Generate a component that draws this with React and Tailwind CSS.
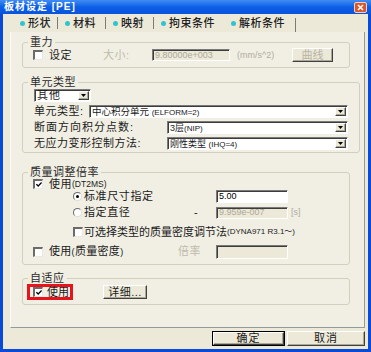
import React from "react";

const sunken =
  "border border-t-[#7a7a7a] border-l-[#7a7a7a] border-b-[#ffffff] border-r-[#ffffff] shadow-[inset_1px_1px_0_#3c3c3c]";
const raised =
  "bg-[#ece9d8] border border-t-[#ffffff] border-l-[#ffffff] border-b-[#404040] border-r-[#404040] shadow-[inset_-1px_-1px_0_#aca899]";

function Check({ checked }) {
  return (
    <span className="w-[10px] h-[10px] shrink-0 flex items-center justify-center bg-white border-t-2 border-l-2 border-t-[#6b6b6b] border-l-[#6b6b6b] border-b border-r border-b-[#e8e8e8] border-r-[#e8e8e8]">
      {checked && (
        <svg width="6" height="5" viewBox="0 0 6 5">
          <path d="M0.4 2.2 L2.2 4 L5.6 0.5" stroke="#000" strokeWidth="1.3" fill="none" />
        </svg>
      )}
    </span>
  );
}

function Radio({ checked }) {
  return (
    <span className="w-[9px] h-[9px] shrink-0 rounded-full flex items-center justify-center bg-white border border-t-[#6b6b6b] border-l-[#6b6b6b] border-b-[#dddddd] border-r-[#dddddd]">
      {checked && <span className="w-[3px] h-[3px] rounded-full bg-black" />}
    </span>
  );
}

function Select({ w, children }) {
  return (
    <div className={`${w} h-[13px] flex items-center bg-white ${sunken}`}>
      <span className="flex-1 pl-[2px] whitespace-nowrap overflow-hidden">{children}</span>
      <span className={`w-[11px] h-[9px] mr-[1px] flex items-center justify-center ${raised}`}>
        <svg width="5" height="3" viewBox="0 0 5 3">
          <path d="M0 0H5L2.5 3Z" fill="#000" />
        </svg>
      </span>
    </div>
  );
}

function Input({ w, h, value, disabled }) {
  return (
    <div
      className={`${w} ${h} flex items-center pl-[2px] text-[9px] ${sunken} ${
        disabled ? "bg-[#ece9d8] text-[#aca899]" : "bg-white text-black"
      }`}
    >
      {value}
    </div>
  );
}

function Group({ title, mt, children }) {
  return (
    <fieldset className={`${mt} w-[328px] border border-[#d0d0bf] rounded-[3px]`}>
      <legend className="ml-[5px] px-[2px] h-[12px] leading-[12px] text-[11px] tracking-[0.5px] text-[#2a2a2a]">
        {title}
      </legend>
      {children}
    </fieldset>
  );
}

function Tab({ w, pl, label }) {
  return (
    <div className={`${w} ${pl} flex items-center gap-[3px] h-full`}>
      <span className="w-[5px] h-[5px] rounded-full bg-[#2ec4d2] shrink-0" />
      <span className="text-[11px] tracking-[0.5px] font-medium text-[#222]">{label}</span>
    </div>
  );
}

export default function App() {
  return (
    <div className="w-[371px] h-[352px] flex flex-col bg-[#0a4ad8] font-['Liberation_Sans','Noto_Sans_CJK_SC',sans-serif] text-[11px] leading-none text-[#1a1a1a] overflow-hidden">
      {/* Title bar */}
      <div className="h-[14px] shrink-0 flex items-center justify-between pl-[4px] pr-[4px] bg-gradient-to-b from-[#3f8cf3] via-[#0b5fe6] to-[#0a52dc]">
        <span className="text-white font-bold text-[10px] tracking-[1px]">板材设定 [PE]</span>
        <span className="w-[13px] h-[11px] rounded-[2px] bg-[#d9572c] border border-[#f2d0c0] flex items-center justify-center">
          <svg width="7" height="7" viewBox="0 0 7 7">
            <path d="M1 1L6 6M6 1L1 6" stroke="#fff" strokeWidth="1.6" />
          </svg>
        </span>
      </div>

      {/* Body */}
      <div className="flex-1 mx-[3px] mb-[3px] bg-[#ece9d8] flex flex-col">
        {/* Tabs */}
        <div className="h-[18px] flex items-center">
          <Tab w="w-[54px]" pl="pl-[17px]" label="形状" />
          <span className="w-px h-[12px] bg-[#7a7a7a]" />
          <Tab w="w-[47px]" pl="pl-[7px]" label="材料" />
          <span className="w-px h-[12px] bg-[#7a7a7a]" />
          <Tab w="w-[47px]" pl="pl-[7px]" label="映射" />
          <span className="w-px h-[12px] bg-[#7a7a7a]" />
          <Tab w="w-[71px]" pl="pl-[7px]" label="拘束条件" />
          <Tab w="w-[70px]" pl="pl-[6px]" label="解析条件" />
          <span className="w-px h-[14px] self-end bg-[#7a7a7a]" />
        </div>

        {/* Panel */}
        <div className="ml-[7px] w-[355px] h-[296px] bg-[#f1efe4] border-l border-l-[#fbfaf5] border-r border-r-[#919b9c] border-b border-b-[#919b9c] pl-[11px] pt-[4px]">
          {/* 重力 */}
          <Group title="重力" mt="mt-0">
            <div className="px-[10px] pb-[5px]">
              <div className="h-[14px] flex items-center">
                <Check />
                <span className="ml-[6px] w-[54px] tracking-[0.5px]">设定</span>
                <span className="w-[49px] text-[#c0bcaa] tracking-[0.5px]">大小:</span>
                <Input w="w-[78px]" h="h-[12px]" value="9.80000e+003" disabled />
                <span className="ml-[7px] w-[55px] text-[9px] text-[#b0ac9c]">(mm/s^2)</span>
                <span className={`w-[41px] h-[14px] flex items-center justify-center text-[#b8b4a4] ${raised}`}>
                  曲线
                </span>
              </div>
            </div>
          </Group>

          {/* 单元类型 */}
          <Group title="单元类型" mt="mt-[8px]">
            <div className="px-[11px] pt-[1px] pb-[2px] flex flex-col gap-[3px]">
              <div className="h-[13px] flex items-center">
                <Select w="w-[57px]">
                  <span className="tracking-[1px]">其他</span>
                </Select>
              </div>
              <div className="h-[13px] flex items-center">
                <span className="w-[55px] tracking-[0.5px]">单元类型:</span>
                <Select w="w-[259px]">
                  <span className="text-[9.5px]">中心积分单元 </span>
                  <span className="text-[8px]">(ELFORM=2)</span>
                </Select>
              </div>
              <div className="h-[13px] flex items-center">
                <span className="w-[133px] tracking-[1px]">断面方向积分点数:</span>
                <Select w="w-[181px]">
                  <span className="text-[9px]">3层</span>
                  <span className="text-[8px]">(NIP)</span>
                </Select>
              </div>
              <div className="h-[13px] flex items-center">
                <span className="w-[133px] tracking-[0.5px]">无应力变形控制方法:</span>
                <Select w="w-[181px]">
                  <span className="text-[9px]">刚性类型 </span>
                  <span className="text-[8px]">(IHQ=4)</span>
                </Select>
              </div>
            </div>
          </Group>

          {/* 质量调整倍率 */}
          <Group title="质量调整倍率" mt="mt-[13px]">
            <div className="px-[10px] pb-[6px] flex flex-col">
              <div className="h-[12px] flex items-center">
                <Check checked />
                <span className="ml-[6px] tracking-[0.5px]">使用</span>
                <span className="text-[8.5px]">(DT2MS)</span>
              </div>
              <div className="h-[13px] flex items-center pl-[40px]">
                <Radio checked />
                <span className="ml-[2px] w-[132px] tracking-[0.6px]">标准尺寸指定</span>
                <Input w="w-[72px]" h="h-[13px]" value="5.00" />
              </div>
              <div className="mt-[3px] h-[13px] flex items-center pl-[40px]">
                <Radio />
                <span className="ml-[2px] w-[110px] tracking-[0.6px]">指定直径</span>
                <span className="w-[22px]">-</span>
                <Input w="w-[72px]" h="h-[12px]" value="9.959e-007" disabled />
                <span className="ml-[3px] text-[9px] text-[#b0ac9c]">[s]</span>
              </div>
              <div className="mt-[7px] h-[12px] flex items-center pl-[40px]">
                <Check />
                <span className="ml-[1px] whitespace-nowrap">可选择类型的质量密度调节法</span>
                <span className="text-[8px] whitespace-nowrap">(DYNA971 R3.1～)</span>
              </div>
              <div className="mt-[7px] h-[13px] flex items-center">
                <Check />
                <span className="ml-[6px] w-[129px] tracking-[0.3px]">
                  使用<span className="text-[9px]">(</span>质量密度<span className="text-[9px]">)</span>
                </span>
                <span className="w-[38px] text-[#c0bcaa] tracking-[0.5px]">倍率</span>
                <Input w="w-[72px]" h="h-[14px]" value="" disabled />
              </div>
            </div>
          </Group>

          {/* 自适应 */}
          <Group title="自适应" mt="mt-[7px]">
            <div className="pl-[4px] pb-[4px] flex items-center">
              <div className="w-[46px] h-[16px] border-[3px] border-[#e8141b] flex items-center pl-[3px] whitespace-nowrap">
                <Check checked />
                <span className="ml-[4px]">使用</span>
              </div>
              <span className={`ml-[30px] w-[44px] h-[14px] flex items-center justify-center tracking-[0.5px] ${raised}`}>
                详细...
              </span>
            </div>
          </Group>
        </div>

        {/* Bottom buttons */}
        <div className="mt-[3px] flex justify-end gap-[2px] pr-[3px]">
          <div className="w-[73px] h-[15px] border border-black">
            <div className={`w-full h-full flex items-center justify-center tracking-[1px] ${raised}`}>确定</div>
          </div>
          <div className={`w-[78px] h-[15px] flex items-center justify-center tracking-[1px] ${raised}`}>取消</div>
        </div>
      </div>
    </div>
  );
}
